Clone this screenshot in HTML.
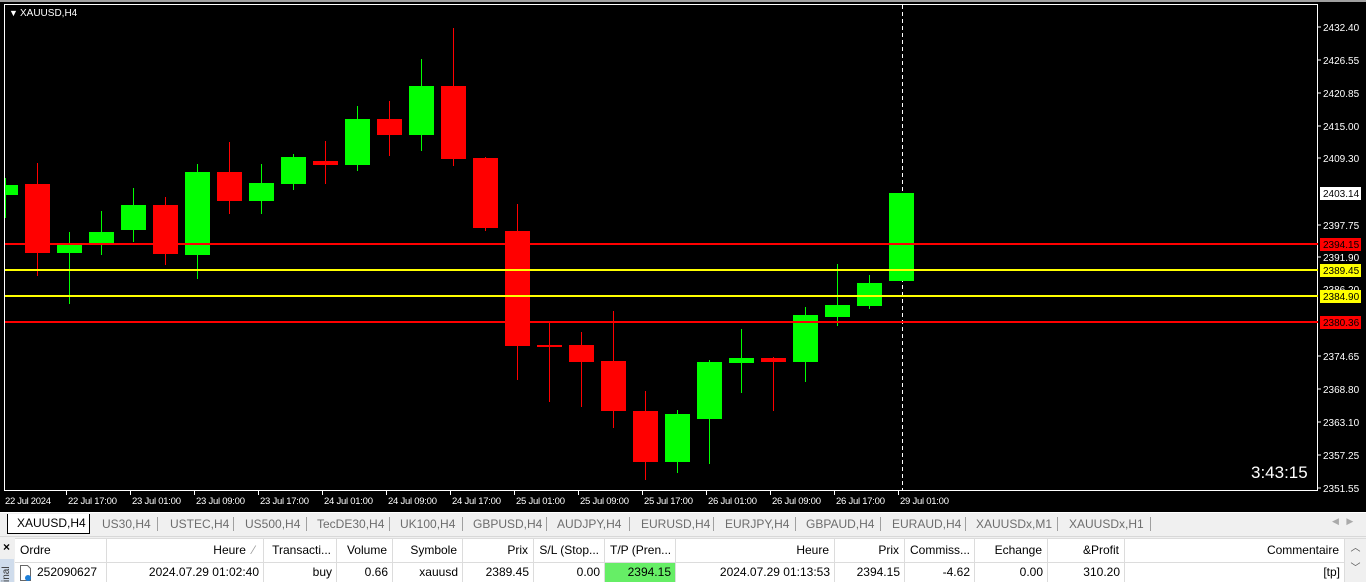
<!DOCTYPE html>
<html><head><meta charset="utf-8"><style>
*{margin:0;padding:0;box-sizing:border-box}
body{width:1366px;height:582px;overflow:hidden;background:#f0f0f0;font-family:"Liberation Sans",sans-serif;position:relative}
.abs{position:absolute}
.tab{position:absolute;top:515px;height:18px;font-size:12px;color:#6d6d6d;line-height:18px}
.sep{position:absolute;top:517px;width:1px;height:14px;background:#a0a0a0}
.hd{position:absolute;top:539px;height:23px;font-size:12px;line-height:23px;color:#000;white-space:nowrap;overflow:hidden;border-right:1px solid #dcdcdc;padding:0 5px;background:#fff}
.rw{position:absolute;top:563px;height:19px;font-size:12px;line-height:19px;color:#000;white-space:nowrap;overflow:hidden;border-right:1px solid #dcdcdc;padding:0 4px;background:#fff}
.r{text-align:right}
</style></head><body>
<div class="abs" style="left:0;top:0;width:1366px;height:512px;background:#000"></div>
<div class="abs" style="left:0;top:0;width:1366px;height:2px;background:#a0a0a0"></div>
<svg class="abs" style="left:0;top:0" width="1366" height="512" font-family="Liberation Sans, sans-serif" shape-rendering="crispEdges">
<rect x="4.5" y="4.5" width="1313" height="486" fill="none" stroke="#fff" stroke-width="1"/>
<line x1="902.5" y1="5" x2="902.5" y2="490" stroke="#fff" stroke-dasharray="4,3"/>
<g id="c"></g>
<g stroke-width="2">
<line x1="5" y1="244" x2="1318" y2="244" stroke="#f00"/>
<line x1="5" y1="270" x2="1318" y2="270" stroke="#ff0"/>
<line x1="5" y1="296" x2="1318" y2="296" stroke="#ff0"/>
<line x1="5" y1="322" x2="1318" y2="322" stroke="#f00"/>
</g>
<text x="9" y="16" font-size="9" fill="#fff">▼</text>
<text x="20" y="16" font-size="10" fill="#fff">XAUUSD,H4</text>
<g font-size="10" fill="#fff">
<text x="1323" y="31">2432.40</text><text x="1323" y="64">2426.55</text><text x="1323" y="97">2420.85</text>
<text x="1323" y="130">2415.00</text><text x="1323" y="162">2409.30</text><text x="1323" y="229">2397.75</text>
<text x="1323" y="261">2391.90</text><text x="1323" y="293">2386.20</text><text x="1323" y="360">2374.65</text>
<text x="1323" y="393">2368.80</text><text x="1323" y="426">2363.10</text><text x="1323" y="459">2357.25</text>
<text x="1323" y="492">2351.55</text>
</g>
<g stroke="#fff">
<line x1="1318" y1="27" x2="1321" y2="27"/><line x1="1318" y1="60" x2="1321" y2="60"/><line x1="1318" y1="93" x2="1321" y2="93"/><line x1="1318" y1="126" x2="1321" y2="126"/><line x1="1318" y1="158" x2="1321" y2="158"/><line x1="1318" y1="225" x2="1321" y2="225"/><line x1="1318" y1="257" x2="1321" y2="257"/><line x1="1318" y1="356" x2="1321" y2="356"/><line x1="1318" y1="389" x2="1321" y2="389"/><line x1="1318" y1="422" x2="1321" y2="422"/><line x1="1318" y1="455" x2="1321" y2="455"/><line x1="1318" y1="488" x2="1321" y2="488"/>
</g>
<rect x="1320" y="187" width="41" height="13" fill="#fff"/><text x="1323" y="197" font-size="10" fill="#000">2403.14</text>
<rect x="1320" y="238" width="41" height="13" fill="#f00"/><text x="1323" y="248" font-size="10" fill="#000">2394.15</text>
<rect x="1320" y="264" width="41" height="13" fill="#ff0"/><text x="1323" y="274" font-size="10" fill="#000">2389.45</text>
<rect x="1320" y="290" width="41" height="13" fill="#ff0"/><text x="1323" y="300" font-size="10" fill="#000">2384.90</text>
<rect x="1320" y="316" width="41" height="13" fill="#f00"/><text x="1323" y="326" font-size="10" fill="#000">2380.36</text>
<text x="1251" y="478" font-size="17" fill="#fff">3:43:15</text>
<g id="d" font-size="9.5" fill="#fff"></g>
</svg>
<script>
var C=[[5,185,195,178,218,1],[37,184,253,163,276,0],[69,245,253,232,304,1],[101,232,245,211,255,1],[133,205,230,188,242,1],[165,205,254,197,265,0],[197,172,255,164,279,1],[229,172,201,142,214,0],[261,183,201,164,214,1],[293,157,184,154,190,1],[325,161,165,141,184,0],[357,119,165,106,171,1],[389,119,135,101,156,0],[421,86,135,59,151,1],[453,86,159,28,166,0],[485,158,228,157,231,0],[517,231,346,204,380,0],[549,345,347,321,402,0],[581,345,362,332,407,0],[613,361,411,311,428,0],[645,411,462,391,480,0],[677,414,462,410,473,1],[709,362,419,360,464,1],[741,358,363,329,393,1],[773,358,362,357,411,0],[805,315,362,307,382,1],[837,305,317,264,326,1],[869,283,306,275,309,1],[901,193,281,193,281,1]];
var s='';C.forEach(function(c){var col=c[5]?'#0f0':'#f00';var x0=c[0]-12;if(x0<5)x0=5;
s+='<rect x="'+c[0]+'" y="'+c[3]+'" width="1" height="'+(c[4]-c[3])+'" fill="'+col+'"/>';
s+='<rect x="'+x0+'" y="'+c[1]+'" width="'+(c[0]+13-x0)+'" height="'+Math.max(2,c[2]-c[1])+'" fill="'+col+'"/>';});
document.getElementById('c').innerHTML=s;
var D=['22 Jul 2024','22 Jul 17:00','23 Jul 01:00','23 Jul 09:00','23 Jul 17:00','24 Jul 01:00','24 Jul 09:00','24 Jul 17:00','25 Jul 01:00','25 Jul 09:00','25 Jul 17:00','26 Jul 01:00','26 Jul 09:00','26 Jul 17:00','29 Jul 01:00'];
var t='';D.forEach(function(d,i){var x=i?4+64*i:5;t+='<text x="'+x+'" y="504" textLength="'+(i?49:46)+'">'+d+'</text>';if(i)t+='<line x1="'+(x-1.5)+'" y1="491" x2="'+(x-1.5)+'" y2="495" stroke="#fff"/>';});
document.getElementById('d').innerHTML=t;
</script>
<div class="abs" style="left:0;top:512px;width:1366px;height:1px;background:#fff"></div>
<div class="abs" style="left:7px;top:514px;width:83px;height:20px;background:#fff;border:1px solid #000;border-top:none;font-size:12px;line-height:19px;padding-left:9px;color:#000">XAUUSD,H4</div>
<div class="tab" style="left:102px">US30,H4</div><div class="sep" style="left:157px"></div>
<div class="tab" style="left:170px">USTEC,H4</div><div class="sep" style="left:233px"></div>
<div class="tab" style="left:245px">US500,H4</div><div class="sep" style="left:306px"></div>
<div class="tab" style="left:317px">TecDE30,H4</div><div class="sep" style="left:389px"></div>
<div class="tab" style="left:400px">UK100,H4</div><div class="sep" style="left:462px"></div>
<div class="tab" style="left:473px">GBPUSD,H4</div><div class="sep" style="left:546px"></div>
<div class="tab" style="left:557px">AUDJPY,H4</div><div class="sep" style="left:629px"></div>
<div class="tab" style="left:641px">EURUSD,H4</div><div class="sep" style="left:713px"></div>
<div class="tab" style="left:725px">EURJPY,H4</div><div class="sep" style="left:795px"></div>
<div class="tab" style="left:806px">GBPAUD,H4</div><div class="sep" style="left:880px"></div>
<div class="tab" style="left:892px">EURAUD,H4</div><div class="sep" style="left:965px"></div>
<div class="tab" style="left:976px">XAUUSDx,M1</div><div class="sep" style="left:1057px"></div>
<div class="tab" style="left:1069px">XAUUSDx,H1</div><div class="sep" style="left:1150px"></div>
<div class="abs" style="left:1332px;top:516px;font-size:9px;color:#aaa">◀&nbsp;&nbsp;&nbsp;▶</div>
<div class="abs" style="left:0;top:536px;width:1366px;height:1px;background:#d8d8d8"></div>
<div class="abs" style="left:3px;top:540px;font-size:12px;font-weight:bold">×</div>
<div class="abs" style="left:0;top:559px;width:14px;height:23px;background:#cfdcec;font-size:10px;color:#333;writing-mode:vertical-rl;transform:rotate(180deg);line-height:14px">inal</div>
<div class="abs" style="left:15px;top:538px;width:1351px;height:1px;background:#dcdcdc"></div>
<div class="hd" style="left:15px;width:92px">Ordre</div>
<div class="hd r" style="left:107px;width:157px">Heure&nbsp;&nbsp;<span style="color:#999">⁄</span>&nbsp;</div>
<div class="hd r" style="left:264px;width:73px">Transacti...</div>
<div class="hd r" style="left:337px;width:56px">Volume</div>
<div class="hd r" style="left:393px;width:70px">Symbole</div>
<div class="hd r" style="left:463px;width:71px">Prix</div>
<div class="hd r" style="left:534px;width:71px">S/L (Stop...</div>
<div class="hd r" style="left:605px;width:71px">T/P (Pren...</div>
<div class="hd r" style="left:676px;width:159px">Heure</div>
<div class="hd r" style="left:835px;width:70px">Prix</div>
<div class="hd r" style="left:905px;width:70px">Commiss...</div>
<div class="hd r" style="left:975px;width:73px">Echange</div>
<div class="hd r" style="left:1048px;width:77px">&amp;Profit</div>
<div class="hd r" style="left:1125px;width:220px">Commentaire</div>
<div class="abs" style="left:15px;top:562px;width:1330px;height:1px;background:#dcdcdc"></div>
<div class="rw" style="left:15px;width:92px;padding-left:22px">252090627</div>
<svg class="abs" style="left:19px;top:565px" width="14" height="17"><path d="M1.5 0.5h7l3 3v12h-10z" fill="#fff" stroke="#666"/><circle cx="9" cy="13" r="3" fill="#1e7fd8"/></svg>
<div class="rw r" style="left:107px;width:157px">2024.07.29 01:02:40</div>
<div class="rw r" style="left:264px;width:73px">buy</div>
<div class="rw r" style="left:337px;width:56px">0.66</div>
<div class="rw r" style="left:393px;width:70px">xauusd</div>
<div class="rw r" style="left:463px;width:71px">2389.45</div>
<div class="rw r" style="left:534px;width:71px">0.00</div>
<div class="rw r" style="left:605px;width:71px;background:#66ee66">2394.15</div>
<div class="rw r" style="left:676px;width:159px">2024.07.29 01:13:53</div>
<div class="rw r" style="left:835px;width:70px">2394.15</div>
<div class="rw r" style="left:905px;width:70px">-4.62</div>
<div class="rw r" style="left:975px;width:73px">0.00</div>
<div class="rw r" style="left:1048px;width:77px">310.20</div>
<div class="rw r" style="left:1125px;width:220px">[tp]</div>
<div class="abs" style="left:1345px;top:539px;width:21px;height:43px;background:#f0f0f0;font-size:10px;color:#555;text-align:center;line-height:20px">︿<br>﹀</div>
</body></html>
